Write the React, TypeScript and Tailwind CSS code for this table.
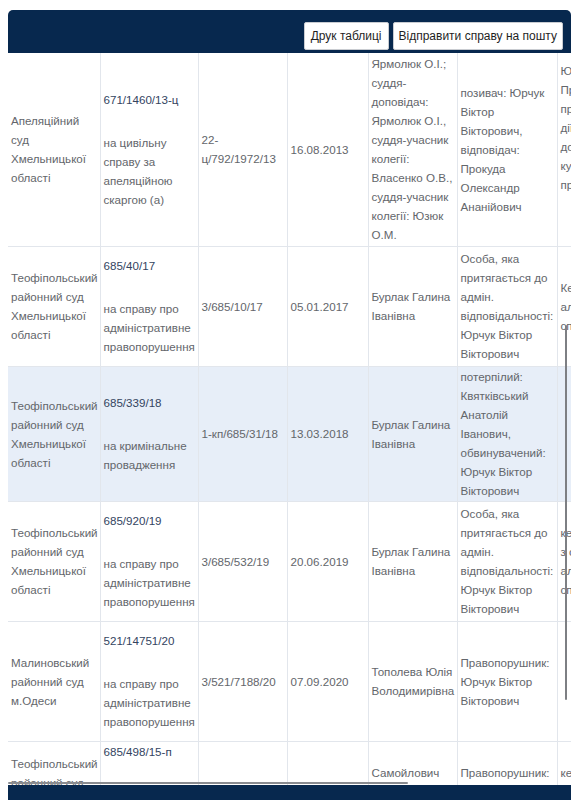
import React from 'react';

type Row = {
  court: string[];
  caseNo: string;
  caseDesc: string[];
  procNo: string[];
  date: string;
  judges: string[];
  parties: string[];
  subject: string[];
  subjectTop?: boolean;
  highlight?: boolean;
  h: string;
};

const rows: Row[] = [
  {
    court: ['Апеляційний', 'суд', 'Хмельницької', 'області'],
    caseNo: '671/1460/13-ц',
    caseDesc: ['на цивільну', 'справу за', 'апеляційною', 'скаргою (а)'],
    procNo: ['22-', 'ц/792/1972/13'],
    date: '16.08.2013',
    judges: [
      'Ярмолюк О.І.;',
      'суддя-',
      'доповідач:',
      'Ярмолюк О.І.,',
      'суддя-учасник',
      'колегії:',
      'Власенко О.В.,',
      'суддя-учасник',
      'колегії: Юзюк',
      'О.М.',
    ],
    parties: ['позивач: Юрчук', 'Віктор', 'Вікторович,', 'відповідач:', 'Прокуда', 'Олександр', 'Ананійович'],
    subject: ['Юрчук В.В.', 'Про визнання', 'припинення', 'дії', 'договору', 'купівлі-', 'продажу'],
    subjectTop: true,
    h: 'h-[193px]',
  },
  {
    court: ['Теофіпольський', 'районний суд', 'Хмельницької', 'області'],
    caseNo: '685/40/17',
    caseDesc: ['на справу про', 'адміністративне', 'правопорушення'],
    procNo: ['3/685/10/17'],
    date: '05.01.2017',
    judges: ['Бурлак Галина', 'Іванівна'],
    parties: ['Особа, яка', 'притягається до', 'адмін.', 'відповідальності:', 'Юрчук Віктор', 'Вікторович'],
    subject: ['Керування ТЗ', 'алкогольного', "сп'яніння"],
    h: 'h-[120px]',
  },
  {
    court: ['Теофіпольський', 'районний суд', 'Хмельницької', 'області'],
    caseNo: '685/339/18',
    caseDesc: ['на кримінальне', 'провадження'],
    procNo: ['1-кп/685/31/18'],
    date: '13.03.2018',
    judges: ['Бурлак Галина', 'Іванівна'],
    parties: ['потерпілий:', 'Квятківський', 'Анатолій', 'Іванович,', 'обвинувачений:', 'Юрчук Віктор', 'Вікторович'],
    subject: [],
    highlight: true,
    h: 'h-[135px]',
  },
  {
    court: ['Теофіпольський', 'районний суд', 'Хмельницької', 'області'],
    caseNo: '685/920/19',
    caseDesc: ['на справу про', 'адміністративне', 'правопорушення'],
    procNo: ['3/685/532/19'],
    date: '20.06.2019',
    judges: ['Бурлак Галина', 'Іванівна'],
    parties: ['Особа, яка', 'притягається до', 'адмін.', 'відповідальності:', 'Юрчук Віктор', 'Вікторович'],
    subject: ['керування ТЗ', 'з ознаками', 'алкогольного', "сп'яніння"],
    h: 'h-[120px]',
  },
  {
    court: ['Малиновський', 'районний суд', 'м.Одеси'],
    caseNo: '521/14751/20',
    caseDesc: ['на справу про', 'адміністративне', 'правопорушення'],
    procNo: ['3/521/7188/20'],
    date: '07.09.2020',
    judges: ['Тополева Юлія', 'Володимирівна'],
    parties: ['Правопорушник:', 'Юрчук Віктор', 'Вікторович'],
    subject: [],
    h: 'h-[120px]',
  },
  {
    court: ['Теофіпольський', 'районний суд', 'Хмельницької', 'області'],
    caseNo: '685/498/15-п',
    caseDesc: ['на справу про', 'адміністративне', 'правопорушення'],
    procNo: ['3/685/201/15'],
    date: '14.05.2015',
    judges: ['Самойлович', 'Ігор', 'Петрович'],
    parties: ['Правопорушник:', 'Юрчук Віктор', 'Вікторович'],
    subject: ['керування', 'ознаками', 'алкогольного'],
    h: 'h-[100px]',
  },
];

const Lines = ({ items }: { items: string[] }) => (
  <>
    {items.map((t, i) => (
      <div key={i} className="whitespace-nowrap">
        {t}
      </div>
    ))}
  </>
);

const td = 'border-r border-b border-[#e2e6ec] pl-[3px] pr-0 py-0 align-middle overflow-hidden';

export default function App() {
  return (
    <div
      className="relative h-[800px] w-[579px] overflow-hidden bg-white flex flex-col"
      style={{ fontFamily: '"Liberation Sans", Arial, sans-serif' }}
    >
      <div className="px-2 pt-[10px]">
        <div className="flex h-[43px] items-end justify-end gap-[4px] rounded-t-[5px] bg-[#07284e] pr-[8px] pb-[3px]">
          <button className="h-[28px] rounded-[2px] border border-[#c9ccd1] bg-white px-[6px] text-[12px] text-[#1f1f1f]">
            Друк таблиці
          </button>
          <button className="h-[28px] rounded-[2px] border border-[#c9ccd1] bg-white px-[5px] text-[12px] text-[#1f1f1f]">
            Відправити справу на пошту
          </button>
        </div>
      </div>

      <div className="flex-1 overflow-hidden pl-2">
        <div className="w-[563px] overflow-hidden">
          <table className="w-[659px] table-fixed border-collapse text-[11.6px] leading-[19px] text-[#63666b]">
            <colgroup>
              <col className="w-[92px]" />
              <col className="w-[98px]" />
              <col className="w-[89px]" />
              <col className="w-[81px]" />
              <col className="w-[89px]" />
              <col className="w-[100px]" />
              <col className="w-[110px]" />
            </colgroup>
            <tbody>
              {rows.map((r, i) => (
                <tr key={i} className={`${r.h} ${r.highlight ? 'bg-[#e7eef8]' : ''}`}>
                  <td className={td}>
                    <Lines items={r.court} />
                  </td>
                  <td className={td}>
                    <div className="mb-[24px] whitespace-nowrap text-[#33445f]">{r.caseNo}</div>
                    <Lines items={r.caseDesc} />
                  </td>
                  <td className={td}>
                    <Lines items={r.procNo} />
                  </td>
                  <td className={td}>{r.date}</td>
                  <td className={td}>
                    <Lines items={r.judges} />
                  </td>
                  <td className={td}>
                    <Lines items={r.parties} />
                  </td>
                  <td className={`${td} ${r.subjectTop ? '!align-top pt-[8px]' : ''}`}>
                    <Lines items={r.subject} />
                  </td>
                </tr>
              ))}
            </tbody>
          </table>
        </div>
      </div>

      <div className="mx-2 h-[15px] bg-[#07284e]" />

      {/* scroll indicators */}
      <div className="absolute left-[565px] top-[325px] h-[375px] w-[2px] rounded-full bg-[#7d7f83]" />
      <div className="absolute left-[8px] top-[782px] h-[2px] w-[400px] rounded-full bg-[#8a8c90]" />
    </div>
  );
}
